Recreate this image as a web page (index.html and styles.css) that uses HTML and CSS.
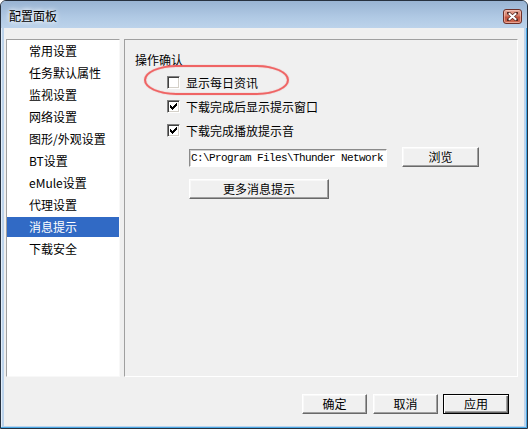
FILE: index.html
```html
<!DOCTYPE html>
<html lang="zh-CN">
<head>
<meta charset="utf-8">
<title>配置面板</title>
<link rel="stylesheet" href="styles.css">
</head>
<body>
<div class="window">
  <div class="titlebar">
    <span class="title">配置面板</span>
    <div class="close">
      <svg width="11" height="9" viewBox="0 0 11 9">
        <path d="M1.5 1 L9.5 8 M9.5 1 L1.5 8" stroke="#5a2a22" stroke-width="3.4" stroke-linecap="square"/>
        <path d="M1.8 1.2 L9.2 7.8 M9.2 1.2 L1.8 7.8" stroke="#ffffff" stroke-width="2" stroke-linecap="butt"/>
      </svg>
    </div>
  </div>
  <div class="client">
    <div class="main">
      <ul class="nav">
        <li>常用设置</li>
        <li>任务默认属性</li>
        <li>监视设置</li>
        <li>网络设置</li>
        <li>图形/外观设置</li>
        <li>BT设置</li>
        <li>eMule设置</li>
        <li>代理设置</li>
        <li class="selected">消息提示</li>
        <li>下载安全</li>
      </ul>
      <div class="panel">
        <div class="group-title">操作确认</div>
        <div class="checks">
          <div class="check-row"><span class="box"></span><span>显示每日资讯</span></div>
          <div class="check-row"><span class="box"><svg class="tick" width="7" height="7" viewBox="0 0 7 7"><rect x="0" y="2" width="1" height="3"/><rect x="1" y="3" width="1" height="3"/><rect x="2" y="4" width="1" height="3"/><rect x="3" y="3" width="1" height="3"/><rect x="4" y="2" width="1" height="3"/><rect x="5" y="1" width="1" height="3"/><rect x="6" y="0" width="1" height="3"/></svg></span><span>下载完成后显示提示窗口</span></div>
          <div class="check-row"><span class="box"><svg class="tick" width="7" height="7" viewBox="0 0 7 7"><rect x="0" y="2" width="1" height="3"/><rect x="1" y="3" width="1" height="3"/><rect x="2" y="4" width="1" height="3"/><rect x="3" y="3" width="1" height="3"/><rect x="4" y="2" width="1" height="3"/><rect x="5" y="1" width="1" height="3"/><rect x="6" y="0" width="1" height="3"/></svg></span><span>下载完成播放提示音</span></div>
        </div>
        <div class="path-row">
          <div class="path-input">C:\Program Files\Thunder Network</div>
          <button class="btn btn-browse">浏览</button>
        </div>
        <button class="btn btn-more">更多消息提示</button>
        <div class="annot"></div>
      </div>
    </div>
    <div class="footer">
      <button class="btn btn-dlg">确定</button>
      <button class="btn btn-dlg">取消</button>
      <button class="btn btn-dlg btn-default">应用</button>
    </div>
  </div>
</div>
</body>
</html>
```

FILE: styles.css
```css
* { box-sizing: border-box; }
html, body { margin: 0; padding: 0; background: #ffffff; }
body {
  font-family: "Noto Sans CJK SC", "Liberation Sans", sans-serif;
  font-size: 12px;
  color: #000;
}
.window {
  width: 528px;
  height: 429px;
  border: 1px solid #27313f;
  border-radius: 6px 6px 0 0;
  background: #bcd3eb;
  padding: 0 3px 2px 3px;
  display: flex;
  flex-direction: column;
  box-shadow: inset 0 -1px 0 #48a8e6, inset -1px 0 0 #48a8e6, inset 1px 0 0 #e2eefa;
}
.titlebar {
  height: 27px;
  margin: 0 -3px;
  padding: 0 5px 0 8px;
  border-radius: 5px 5px 0 0;
  background: linear-gradient(#99b4d3, #b0c9e4 60%, #bcd3eb);
  display: flex;
  align-items: center;
  justify-content: space-between;
}
.title {
  font-size: 12px;
  line-height: 14px;
  margin-top: 2px;
  text-shadow: 0 0 4px #ffffff, 0 0 6px rgba(255,255,255,.9);
}
.close {
  width: 19px;
  height: 15px;
  margin-top: 3px;
  border: 1px solid #6e3028;
  border-radius: 3px;
  background: linear-gradient(#e6ab9c, #d47b66 45%, #c2523d 55%, #cf6e57);
  box-shadow: inset 0 0 0 1px rgba(255,220,210,.5);
  display: flex;
  align-items: center;
  justify-content: center;
}
.client {
  flex: 1;
  background: #f0f0f0;
  padding: 11px 6px 0 2px;
  display: flex;
  flex-direction: column;
}
.main {
  display: flex;
  gap: 4px;
  height: 338px;
}
.nav {
  list-style: none;
  margin: 0;
  padding: 1px 0 0 0;
  width: 114px;
  background: #ffffff;
  border: 1px solid;
  border-color: #a0a0a0 #f8f8f8 #f8f8f8 #a0a0a0;
}
.nav li {
  height: 20px;
  line-height: 20px;
  margin-bottom: 2px;
  padding-left: 22px;
  white-space: nowrap;
}
.nav li.selected {
  background: #316ac5;
  color: #ffffff;
}
.panel {
  position: relative;
  flex: 1;
  border: 1px solid;
  border-color: #a0a0a0 #ffffff #ffffff #a0a0a0;
  padding: 12px 0 0 10px;
}
.group-title {
  line-height: 16px;
}
.checks {
  margin: 8px 0 0 32px;
  display: flex;
  flex-direction: column;
  gap: 11px;
}
.check-row {
  display: flex;
  align-items: center;
  gap: 6px;
  height: 13px;
  line-height: 13px;
  white-space: nowrap;
}
.box {
  width: 13px;
  height: 13px;
  flex: none;
  background: #ffffff;
  border: 1px solid;
  border-color: #808080 #ffffff #ffffff #808080;
  box-shadow: inset 1px 1px 0 #404040, inset -1px -1px 0 #d4d0c8;
  display: flex;
  align-items: center;
  justify-content: center;
}
.tick { fill: #000; display: block; }
.path-row {
  display: flex;
  align-items: flex-start;
  gap: 15px;
  margin: 10px 0 0 54px;
}
.path-input {
  width: 198px;
  height: 18px;
  margin-top: 2px;
  background: #ffffff;
  border: 1px solid;
  border-color: #8a8a8a #ffffff #ffffff #8a8a8a;
  box-shadow: inset 1px 1px 0 #d0d0d0;
  padding-left: 1px;
  font-family: "Liberation Mono", monospace;
  font-size: 11px;
  letter-spacing: -0.6px;
  line-height: 16px;
  white-space: nowrap;
  overflow: hidden;
}
.btn {
  font-family: "Noto Sans CJK SC", "Liberation Sans", sans-serif;
  font-size: 12px;
  line-height: 16px;
  color: #000;
  height: 20px;
  padding: 0;
  background: #f0f0f0;
  border: 1px solid;
  border-color: #ffffff #696969 #696969 #ffffff;
  box-shadow: inset -1px -1px 0 #a0a0a0, inset 1px 1px 0 #f8f8f8;
  border-radius: 0;
  display: block;
}
.btn-browse { width: 77px; }
.btn-more { width: 140px; margin: 12px 0 0 54px; }
.annot {
  position: absolute;
  left: 19px;
  top: 25px;
  width: 145px;
  height: 30px;
  border: 2px solid rgba(238, 84, 84, 0.9);
  border-radius: 32px / 15px;
  box-shadow: 0 0 1px rgba(238, 84, 84, 0.7), inset 0 0 1px rgba(238, 84, 84, 0.7);
  pointer-events: none;
}
.footer {
  display: flex;
  justify-content: flex-end;
  gap: 6px;
  margin-top: 17px;
  padding-right: 9px;
}
.btn-dlg { width: 65px; }
.btn-default {
  margin-left: -1px;
  width: 66px;
  border: 1px solid #000;
  box-shadow: inset 1px 1px 0 #ffffff, inset -1px -1px 0 #696969, inset -2px -2px 0 #a0a0a0;
}
```
